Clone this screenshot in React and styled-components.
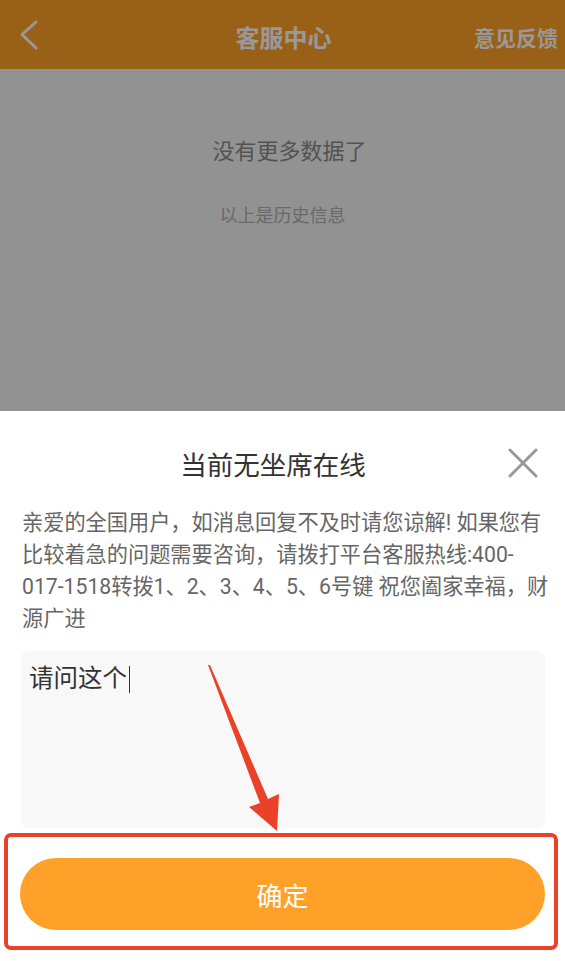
import React from "react";
import styled, { createGlobalStyle } from "styled-components";

const Global = createGlobalStyle`
  html, body { margin: 0; padding: 0; }
  body {
    font-family: Roboto, "Noto Sans CJK SC", "Noto Sans", sans-serif;
    background: #f3f3f3;
    overflow: hidden;
  }
`;

const Page = styled.div`
  position: relative;
  width: 565px;
  height: 961px;
  background: #f3f3f3;
  overflow: hidden;
`;

const Header = styled.header`
  height: 69px;
  background: #ffa128;
  display: grid;
  grid-template-columns: 110px 1fr 110px;
  align-items: center;
  color: #fff;
`;

const BackBtn = styled.div`
  display: flex;
  align-items: center;
  padding-left: 19px;
  height: 100%;
`;

const HeaderTitle = styled.h1`
  margin: 0;
  text-align: center;
  font-size: 24px;
  font-weight: 700;
  padding-top: 4px;
  padding-left: 2px;
`;

const HeaderAction = styled.div`
  text-align: right;
  padding-right: 7px;
  font-size: 21px;
  font-weight: 700;
  padding-top: 4px;
  white-space: nowrap;
`;

const History = styled.div`
  display: flex;
  flex-direction: column;
  align-items: center;
  padding-top: 70px;
  gap: 38px;
`;

const HistoryText = styled.div`
  font-size: ${(p) => p.$size}px;
  color: ${(p) => p.$color};
  line-height: 26px;
  padding-left: ${(p) => p.$shift || 0}px;
`;

const Mask = styled.div`
  position: absolute;
  inset: 0;
  background: rgba(0, 0, 0, 0.4);
`;

const Sheet = styled.div`
  position: absolute;
  left: 0;
  right: 0;
  bottom: 0;
  height: 550px;
  background: #fff;
  box-sizing: border-box;
  padding: 30px 20px 0 21px;
  display: flex;
  flex-direction: column;
`;

const TitleRow = styled.div`
  position: relative;
  height: 44px;
  display: flex;
  align-items: center;
  justify-content: center;
  padding-right: 20px;
`;

const SheetTitle = styled.h2`
  margin: 0;
  font-size: 26.5px;
  font-weight: 400;
  color: #333;
`;

const CloseBtn = styled.div`
  position: absolute;
  right: 7px;
  top: 50%;
  transform: translateY(-50%);
  width: 30px;
  height: 30px;
  display: flex;
  align-items: center;
  justify-content: center;
`;

const Notice = styled.p`
  margin: 22px -12px 0 1px;
  font-size: 21.2px;
  line-height: 32px;
  color: #666;
`;

const InputBox = styled.div`
  margin-top: 16px;
  height: 177px;
  background: #f8f8f8;
  border-radius: 8px;
  box-sizing: border-box;
  padding: 12px 8px;
  font-size: 24.5px;
  line-height: 32px;
  color: #333;
`;

const Caret = styled.span`
  display: inline-block;
  width: 0;
  height: 27px;
  border-left: 1.5px solid #333;
  vertical-align: -6px;
  margin-left: 2px;
`;

const ConfirmBtn = styled.button`
  margin-top: 30px;
  margin-left: -1px;
  height: 72px;
  border: none;
  border-radius: 36px;
  background: #ffa128;
  color: #fff;
  font-family: inherit;
  font-size: 26px;
  cursor: pointer;
`;

const Annotation = styled.svg`
  position: absolute;
  left: 0;
  top: 0;
  pointer-events: none;
`;

export default function App() {
  return (
    <>
      <Global />
      <Page>
        <Header>
          <BackBtn>
            <svg width="20" height="32" viewBox="0 0 20 32">
              <polyline
                points="17,3 3,15.5 17,29"
                fill="none"
                stroke="#fff"
                strokeWidth="3"
                strokeLinecap="round"
                strokeLinejoin="round"
              />
            </svg>
          </BackBtn>
          <HeaderTitle>客服中心</HeaderTitle>
          <HeaderAction>意见反馈</HeaderAction>
        </Header>
        <History>
          <HistoryText $size={22} $color="#8a8a8a" $shift={14}>没有更多数据了</HistoryText>
          <HistoryText $size={18} $color="#b0b0b0">以上是历史信息</HistoryText>
        </History>
        <Mask />
        <Sheet>
          <TitleRow>
            <SheetTitle>当前无坐席在线</SheetTitle>
            <CloseBtn>
              <svg width="30" height="30" viewBox="0 0 30 30">
                <path
                  d="M2 2 L28 28 M28 2 L2 28"
                  stroke="#999"
                  strokeWidth="3"
                  strokeLinecap="round"
                />
              </svg>
            </CloseBtn>
          </TitleRow>
          <Notice>
            亲爱的全国用户，如消息回复不及时请您谅解! 如果您有
            <br />
            比较着急的问题需要咨询，请拨打平台客服热线:400-
            <br />
            017-1518转拨1、2、3、4、5、6号键 祝您阖家幸福，财
            <br />
            源广进
          </Notice>
          <InputBox>
            请问这个<Caret />
          </InputBox>
          <ConfirmBtn>确定</ConfirmBtn>
        </Sheet>
        <Annotation width="565" height="961" viewBox="0 0 565 961">
          <rect
            x="6"
            y="835"
            width="550"
            height="113"
            rx="5"
            fill="none"
            stroke="#ea4129"
            strokeWidth="4"
          />
          <polygon
            points="208,665 210,665 268,799 279,794 277,831 249,807 260,803"
            fill="#ea4129"
          />
        </Annotation>
      </Page>
    </>
  );
}
